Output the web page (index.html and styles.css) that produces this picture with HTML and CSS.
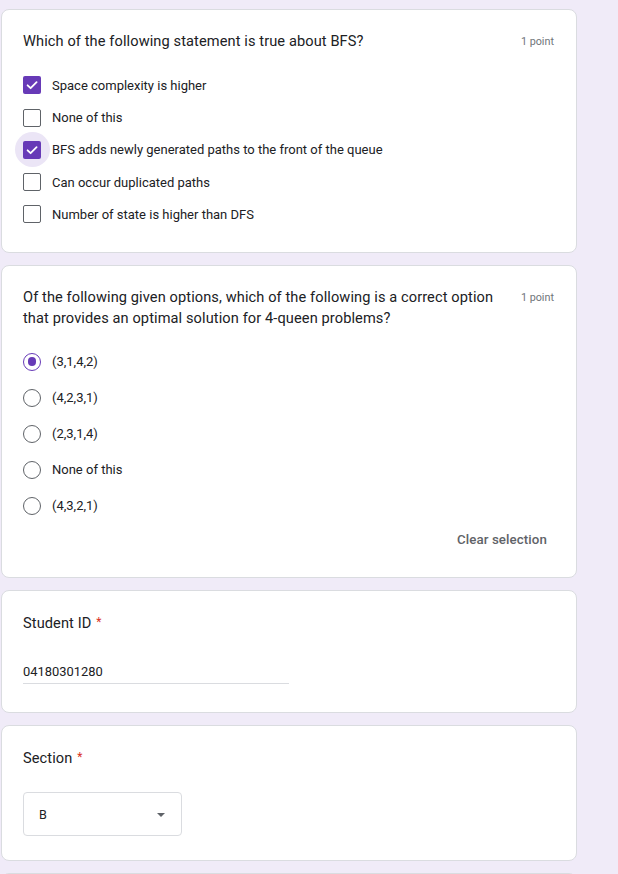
FILE: index.html
```html
<!DOCTYPE html>
<html>
<head>
<meta charset="utf-8">
<link rel="stylesheet" href="styles.css">
</head>
<body>
<div class="page">
  <div class="card card-q1">
    <div class="q-head">
      <div class="q-title">Which of the following statement is true about BFS?</div>
      <div class="q-points">1 point</div>
    </div>
    <div class="options options-cb">
      <div class="opt">
        <span class="cb-wrap"><span class="cb checked"><svg width="18" height="18" viewBox="0 0 18 18"><path d="M4.6 9.3 L7.6 12.2 L13.6 6.1" fill="none" stroke="#fff" stroke-width="1.8" stroke-linecap="round" stroke-linejoin="round"/></svg></span></span>
        <span class="opt-text">Space complexity is higher</span>
      </div>
      <div class="opt">
        <span class="cb-wrap"><span class="cb"></span></span>
        <span class="opt-text">None of this</span>
      </div>
      <div class="opt">
        <span class="cb-wrap focus"><span class="cb checked"><svg width="18" height="18" viewBox="0 0 18 18"><path d="M4.6 9.3 L7.6 12.2 L13.6 6.1" fill="none" stroke="#fff" stroke-width="1.8" stroke-linecap="round" stroke-linejoin="round"/></svg></span></span>
        <span class="opt-text">BFS adds newly generated paths to the front of the queue</span>
      </div>
      <div class="opt">
        <span class="cb-wrap"><span class="cb"></span></span>
        <span class="opt-text">Can occur duplicated paths</span>
      </div>
      <div class="opt">
        <span class="cb-wrap"><span class="cb"></span></span>
        <span class="opt-text">Number of state is higher than DFS</span>
      </div>
    </div>
  </div>

  <div class="card card-q2">
    <div class="q-head">
      <div class="q-title">Of the following given options, which of the following is a correct option that provides an optimal solution for 4-queen problems?</div>
      <div class="q-points">1 point</div>
    </div>
    <div class="options options-radio">
      <div class="opt r">
        <span class="radio selected"><span class="dot"></span></span>
        <span class="opt-text">(3,1,4,2)</span>
      </div>
      <div class="opt r">
        <span class="radio"></span>
        <span class="opt-text">(4,2,3,1)</span>
      </div>
      <div class="opt r">
        <span class="radio"></span>
        <span class="opt-text">(2,3,1,4)</span>
      </div>
      <div class="opt r">
        <span class="radio"></span>
        <span class="opt-text">None of this</span>
      </div>
      <div class="opt r">
        <span class="radio"></span>
        <span class="opt-text">(4,3,2,1)</span>
      </div>
    </div>
    <div class="clear-row"><span class="clear-btn">Clear selection</span></div>
  </div>

  <div class="card card-id">
    <div class="q-title">Student ID <span class="req">*</span></div>
    <div class="text-input">04180301280</div>
  </div>

  <div class="card card-sec">
    <div class="q-title">Section <span class="req">*</span></div>
    <div class="select">
      <span class="select-val">B</span>
      <span class="caret"></span>
    </div>
  </div>

  <div class="card card-next"></div>
</div>
</body>
</html>
```

FILE: styles.css
```css
html, body {
  margin: 0;
  padding: 0;
}
body {
  background: #f0ebf8;
  font-family: Roboto, "Liberation Sans", Arial, sans-serif;
  color: #202124;
}
.page {
  padding: 8.5px 0 0 1px;
}
.card {
  box-sizing: border-box;
  width: 576px;
  background: #fff;
  border: 1px solid #dadce0;
  border-radius: 8px;
  padding: 21px 22px 21px 21px;
  margin-bottom: 12.2px;
}
.q-head {
  display: flex;
  align-items: flex-start;
  gap: 16px;
}
.q-title {
  flex: 1;
  font-size: 14.6px;
  line-height: 21.4px;
  letter-spacing: 0.1px;
  color: #202124;
}
.q-points {
  font-size: 10.8px;
  line-height: 21.6px;
  color: #70757a;
  white-space: nowrap;
}
.options {
  display: flex;
  flex-direction: column;
}
.options-cb {
  margin-top: 17px;
}
.options-radio {
  margin-top: 14px;
}
.opt {
  display: flex;
  align-items: center;
  height: 32.3px;
  gap: 11px;
}
.opt.r {
  height: 36px;
}
.opt-text {
  font-size: 13px;
  color: #202124;
}
.cb-wrap {
  width: 18px;
  height: 18px;
  position: relative;
  display: flex;
  align-items: center;
  justify-content: center;
}
.cb-wrap.focus::before {
  content: "";
  position: absolute;
  width: 35px;
  height: 35px;
  left: -8.5px;
  top: -8.5px;
  border-radius: 50%;
  background: #ebe5f6;
}
.cb {
  position: relative;
  box-sizing: border-box;
  width: 18px;
  height: 18px;
  border: 1.8px solid #5f6368;
  border-radius: 2px;
  display: block;
}
.cb.checked {
  border: none;
  background: #673ab7;
}
.cb svg {
  display: block;
}
.radio {
  box-sizing: border-box;
  width: 18px;
  height: 18px;
  border: 1.8px solid #5f6368;
  border-radius: 50%;
  display: flex;
  align-items: center;
  justify-content: center;
  flex: none;
}
.radio.selected {
  border-color: #673ab7;
}
.radio .dot {
  width: 8.6px;
  height: 8.6px;
  border-radius: 50%;
  background: #673ab7;
}
.clear-row {
  display: flex;
  justify-content: flex-end;
}
.clear-btn {
  height: 32px;
  line-height: 32px;
  padding: 0 7px 0 8px;
  font-size: 13.3px;
  font-weight: 500;
  color: #5f6368;
  letter-spacing: 0.1px;
}
.req {
  color: #d93025;
  font-size: 12px;
  vertical-align: 2px;
  margin-left: 1px;
}
.card-id {
  padding-bottom: 28px;
}
.text-input {
  width: 266px;
  margin-top: 28.4px;
  font-size: 12.9px;
  line-height: 18px;
  padding-bottom: 2.6px;
  border-bottom: 1px solid #dadce0;
  color: #202124;
}
.card-sec {
  padding-bottom: 23.3px;
}
.select {
  box-sizing: border-box;
  width: 159px;
  height: 44.7px;
  margin-top: 22px;
  border: 1px solid #dadce0;
  border-radius: 4px;
  display: flex;
  align-items: center;
  justify-content: space-between;
  padding: 0 16px 0 15px;
}
.select-val {
  font-size: 12.6px;
  color: #202124;
}
.caret {
  width: 0;
  height: 0;
  border-left: 4px solid transparent;
  border-right: 4px solid transparent;
  border-top: 4px solid #5f6368;
  margin-top: 2px;
}
.card-next {
  height: 120px;
}
```
